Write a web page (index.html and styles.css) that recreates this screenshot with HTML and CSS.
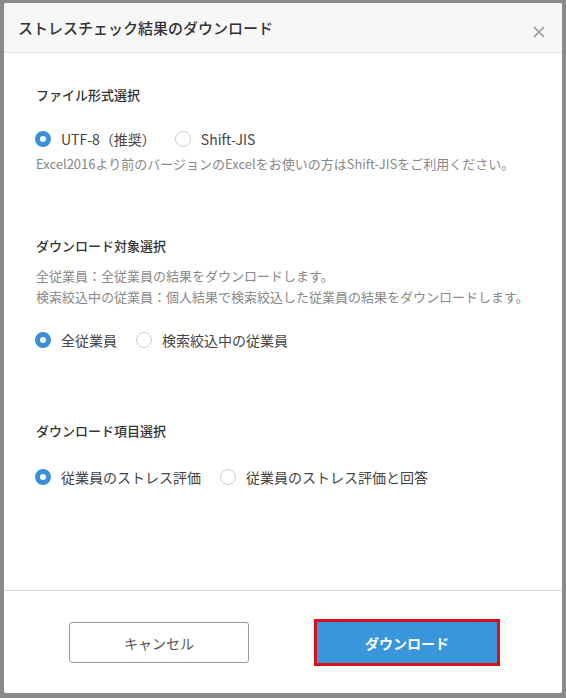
FILE: index.html
```html
<!DOCTYPE html>
<html lang="ja">
<head>
<meta charset="utf-8">
<title>ストレスチェック結果のダウンロード</title>
<link rel="stylesheet" href="styles.css">
</head>
<body>
<div class="modal">
  <div class="modal-header">
    <h1 class="modal-title">ストレスチェック結果のダウンロード</h1>
    <span class="close" aria-label="閉じる">
      <svg width="12" height="12" viewBox="0 0 12 12"><path d="M1 1 L11 11 M11 1 L1 11" stroke="#a6a6a6" stroke-width="1.8" fill="none"/></svg>
    </span>
  </div>
  <div class="modal-body">
    <section class="section s1">
      <h2 class="section-title">ファイル形式選択</h2>
      <div class="options">
        <label class="option"><span class="radio checked"></span><span class="option-label">UTF-8（推奨）</span></label>
        <label class="option"><span class="radio"></span><span class="option-label">Shift-JIS</span></label>
      </div>
      <p class="help help-after">Excel2016より前のバージョンのExcelをお使いの方はShift-JISをご利用ください。</p>
    </section>
    <section class="section s2">
      <h2 class="section-title">ダウンロード対象選択</h2>
      <p class="help desc">全従業員：全従業員の結果をダウンロードします。<br>検索絞込中の従業員：個人結果で検索絞込した従業員の結果をダウンロードします。</p>
      <div class="options options-after-desc">
        <label class="option"><span class="radio checked"></span><span class="option-label">全従業員</span></label>
        <label class="option"><span class="radio"></span><span class="option-label">検索絞込中の従業員</span></label>
      </div>
    </section>
    <section class="section s3">
      <h2 class="section-title">ダウンロード項目選択</h2>
      <div class="options options-wide">
        <label class="option"><span class="radio checked"></span><span class="option-label">従業員のストレス評価</span></label>
        <label class="option"><span class="radio"></span><span class="option-label">従業員のストレス評価と回答</span></label>
      </div>
    </section>
  </div>
  <div class="modal-footer">
    <button class="btn btn-cancel" type="button">キャンセル</button>
    <button class="btn btn-primary" type="button">ダウンロード</button>
  </div>
</div>
</body>
</html>
```
FILE: styles.css
```css
* { box-sizing: border-box; }
html, body {
  margin: 0;
  height: 100%;
}
body {
  background: #8a8a8a;
  padding: 3px 4px 5px 4px;
  font-family: "Noto Sans CJK JP", "Noto Sans", sans-serif;
  color: #333;
}
.modal {
  background: #fff;
  height: 690px;
  display: flex;
  flex-direction: column;
  border-radius: 2px;
  overflow: hidden;
}
.modal-header {
  height: 50px;
  background: #f7f7f7;
  border-bottom: 1px solid #e3e3e3;
  display: flex;
  align-items: center;
  justify-content: space-between;
  padding: 0 17px 0 14px;
}
.modal-title {
  margin: 0;
  font-size: 15px;
  font-weight: 500;
  color: #333;
  line-height: 20px;
}
.close {
  display: flex;
  margin-top: 8px;
}
.modal-body {
  flex: 1;
  padding: 32px 30px 0 32px;
}
.section-title {
  margin: 0;
  font-size: 13px;
  font-weight: 500;
  line-height: 20px;
  color: #333;
}
.s2 { margin-top: 62px; }
.s3 { margin-top: 69px; }
.options {
  display: flex;
  align-items: center;
  height: 24px;
  margin-top: 22px;
  margin-left: -1px;
}
.options-after-desc { margin-top: 21px; }
.options-wide { margin-top: 24px; }
.option {
  display: inline-flex;
  align-items: center;
  gap: 10px;
  margin-right: 19px;
}
.radio {
  width: 16px;
  height: 16px;
  border-radius: 50%;
  border: 1px solid #d0d0d0;
  background: #fff;
  flex: none;
}
.radio.checked {
  border: 5px solid #3a8fd9;
}
.option-label {
  font-size: 14px;
  color: #444;
  line-height: 20px;
}
.help {
  margin: 0;
  font-size: 13px;
  line-height: 21px;
  color: #888;
}
.help-after { margin-top: 2px; }
.desc { margin-top: 9px; }
.modal-footer {
  border-top: 1px solid #dcdcdc;
  padding: 31px 0 30px;
  display: flex;
  justify-content: center;
  gap: 68px;
}
.btn {
  width: 180px;
  height: 41px;
  font-family: inherit;
  font-size: 14px;
  border-radius: 3px;
  cursor: pointer;
}
.btn-cancel {
  background: #fff;
  border: 1px solid #9a9a9a;
  color: #555;
}
.btn-primary {
  background: #3a96db;
  border: none;
  color: #fff;
  font-weight: 700;
  border-radius: 0;
  outline: 3px solid #d9101c;
}
```
